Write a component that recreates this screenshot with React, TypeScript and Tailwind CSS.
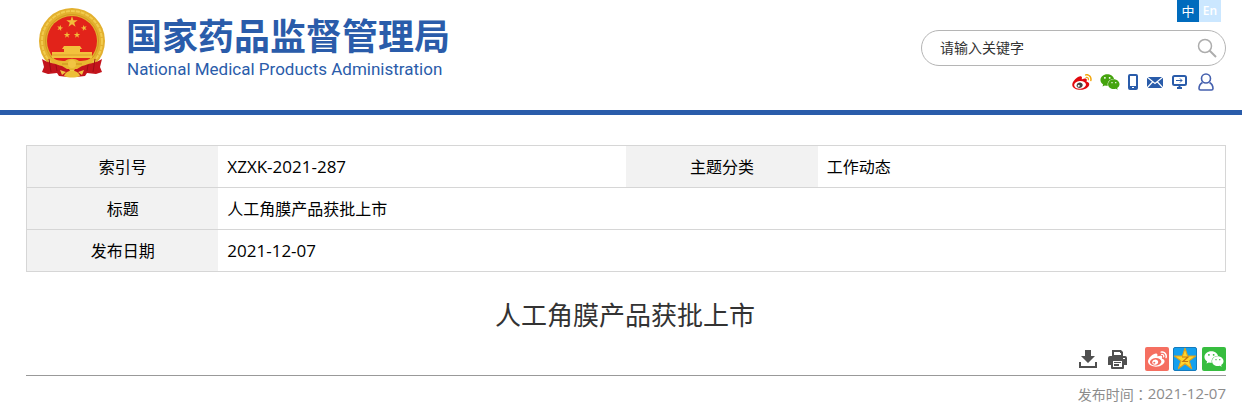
import React from "react";
import { FaWeixin } from "react-icons/fa";

const cjk = "font-['Noto_Sans_CJK_SC',sans-serif]";
const latin = "font-['Open_Sans',sans-serif]";

const STAR = "M0-10 2.3-3.1 9.5-3.1 3.7 1.2 5.9 8.1 0 3.8-5.9 8.1-3.7 1.2-9.5-3.1-2.3-3.1z";

const WEIBO_WAVES =
  "M407 177.6c7.6-24-13.4-46.8-37.4-41.7-22 4.8-28.8-28.1-7.1-32.8 50.1-10.9 92.3 37.1 76.5 84.8-6.8 21.2-38.8 10.8-32-10.3zM347.9 35.1c-25.9 5.6-16.8 43.7 8.3 38.3 72.3-15.2 134.8 52.8 111.7 124-7.4 24.2 29.1 37 37.4 12 31.9-99.8-55.1-195.9-157.4-174.3z";
const WEIBO_BODY =
  "M214.8 446.7C108.5 446.7 0 395.3 0 310.4c0-44.3 28-95.4 76.3-143.7C176 67 279.5 65.8 249.9 161c-4 13.1 12.3 5.7 12.3 6 79.5-33.6 140.5-16.8 114 51.4-3.7 9.4 1.1 10.9 8.3 13.1 135.7 42.3 34.8 215.2-169.7 215.2zm143.7-146.3c-5.4-55.7-78.5-94-163.4-85.7-84.8 8.6-148.8 60.3-143.4 116s78.5 94 163.4 85.7c84.8-8.6 148.8-60.3 143.4-116z";
const WEIBO_EYE =
  "M269.4 346.1c-17.1 38.8-66.8 60-109.1 46.3-40.8-13.1-58-53.4-40.3-89.7 17.7-35.4 63.1-55.4 103.4-45.1 42 10.8 63.1 50.2 46 88.5zm-86.3-30c-12.9-5.4-30 .3-38 12.9-8.3 12.9-4.3 28 8.6 34 13.1 6 30.8.3 39.1-12.9 8-13.1 3.7-28.3-9.7-34z";

type WeiboProps = { className: string; body: string; waves: string; eye: string };

function Weibo({ className, body, waves, eye }: WeiboProps) {
  return (
    <svg viewBox="0 30 512 420" className={className} aria-hidden="true">
      <path d={WEIBO_BODY} className={body} />
      <path d={WEIBO_WAVES} className={waves} />
      <path d={WEIBO_EYE} className={eye} />
    </svg>
  );
}

function Emblem() {
  return (
    <svg viewBox="0 0 68 72" className="w-[68px] h-[72px]" aria-hidden="true">
      {/* ring */}
      <circle cx="34" cy="34" r="33" fill="#e3b02e" />
      <circle cx="34" cy="34" r="30" fill="none" stroke="#f1cb4e" strokeWidth="2" strokeDasharray="4 1" />
      <circle cx="34" cy="34" r="26.500" fill="none" stroke="#d29a22" strokeWidth="1" />
      <circle cx="34" cy="34" r="25" fill="#e2231a" />
      {/* stars */}
      <g fill="#f2bd3a">
        <path d={STAR} transform="translate(34 15) scale(.6)" />
        <path d={STAR} transform="translate(22 21) rotate(15) scale(.32)" />
        <path d={STAR} transform="translate(46 21) rotate(-15) scale(.32)" />
        <path d={STAR} transform="translate(29 28) scale(.34)" />
        <path d={STAR} transform="translate(39 28) scale(.34)" />
      </g>
      {/* gate */}
      <path d="M26 39h16l2 3h-2v3h12v6H14v-6h12v-3h-2z" fill="#f3c13c" />
      <path d="M14 48h40" stroke="#dca02a" strokeWidth="1" />
      {/* drapes */}
      <path d="M4 52c6 4 12 5 19 5l7 3 4 8-4 2-9-1-2-3-9 1-6-2 2-5zM64 52c-6 4-12 5-19 5l-7 3-4 8 4 2 9-1 2-3 9 1 6-2-2-5z" fill="#c3141c" />
      <path d="M11 52l2 13M57 52l-2 13M18 58l1 6M50 58l-1 6" stroke="#9d0e14" strokeWidth="1" />
      {/* knot and gear */}
      <path d="M10 49c6 4 12 5 17 5 4-3 10-3 14 0 5 0 11-1 17-5-3 6-8 9-14 10l-5 3H29l-5-3c-6-1-11-4-14-10z" fill="#e8b730" />
      <path d="M24 57h6l2 2M44 57h-6l-2 2" fill="none" stroke="#c98f1c" strokeWidth="1" />
      <circle cx="34" cy="57" r="4" fill="#f1c443" />
      <path d="M26 69c2-7 14-7 16 0-5 2-11 2-16 0z" fill="#edbe38" />
      <path d="M22 63l6 2-4 3zM46 63l-6 2 4 3z" fill="#f1c443" />
    </svg>
  );
}

function QuickLinks() {
  return (
    <nav className="flex items-center h-[18px] mt-[7px] mr-3 text-[#2a5caa]">
      <a href="#weibo" aria-label="微博">
        <Weibo className="w-5 h-4" body="fill-[#e1090e]" waves="fill-[#f2a70d]" eye="fill-[#444]" />
      </a>
      <a href="#weixin" aria-label="微信" className="ml-2 text-[#45a40e]">
        <FaWeixin className="w-5 h-[18px]" />
      </a>
      <a href="#mobile" aria-label="移动版" className="ml-2">
        <svg viewBox="0 0 10 16" className="w-[10px] h-4">
          <rect x="1" y="1" width="8" height="14" rx="1" fill="none" stroke="currentColor" strokeWidth="2" />
          <path d="M1 12h8v3H1z" fill="currentColor" />
          <path d="M4 13h2v1H4z" fill="#fff" />
        </svg>
      </a>
      <a href="#mail" aria-label="邮箱" className="ml-[9px]">
        <svg viewBox="0 0 16 11" className="w-4 h-[11px]">
          <path d="M0 0h16v11H0z" fill="currentColor" />
          <path d="M0 0 8 6.500 16 0M0 11l5.500-6M16 11l-5.500-6" fill="none" stroke="#fff" strokeWidth="1.200" />
        </svg>
      </a>
      <a href="#screen" aria-label="大屏版" className="ml-[9px]">
        <svg viewBox="0 0 15 14" className="w-[15px] h-[14px]" fill="none" stroke="currentColor">
          <rect x="1" y="1" width="13" height="9" rx="1.500" strokeWidth="2" />
          <path d="M4 5.500h6M8 3.500l2 2-2 2" />
          <path d="M7.500 10v3M5 13h5" strokeWidth="2" />
        </svg>
      </a>
      <a href="#user" aria-label="个人中心" className="ml-[11px]">
        <svg viewBox="0 0 16 18" className="w-4 h-[18px]" fill="none" stroke="#4560ae" strokeWidth="1.600">
          <circle cx="8" cy="5.500" r="4.500" />
          <path d="M4.500 9.500C2 11 1 13 1 15.500 1 16.600 1.600 17 2.500 17h11c.9 0 1.500-.4 1.500-1.500 0-2.500-1-4.500-3.500-6" />
        </svg>
      </a>
    </nav>
  );
}

function Header() {
  return (
    <header className="flex justify-between items-start h-[115px] pl-[38px] pr-4 border-b-[5px] border-[#2a5caa]">
      <a href="#home" className="flex text-[#2a5caa] pt-[7px]">
        <Emblem />
        <div className="ml-5 pt-1">
          <div className="text-[36px] leading-[46px] font-bold whitespace-nowrap">国家药品监督管理局</div>
          <div className="pl-px text-[17px] leading-6 font-['Roboto',sans-serif] whitespace-nowrap">
            National Medical Products Administration
          </div>
        </div>
      </a>
      <div className="flex flex-col items-end">
        <div className="flex mr-[5px] text-xs text-white">
          <button className="w-[22px] h-[22px] bg-[#006bbd] text-[13px]">中</button>
          <button className={`w-[22px] h-[22px] bg-[#cbe7ff] font-semibold ${latin}`}>En</button>
        </div>
        <form className="flex items-center w-[305px] h-9 mt-2 pl-[18px] pr-2 border border-[#b5b5b5] rounded-full">
          <input
            type="text"
            aria-label="请输入关键字"
            placeholder="请输入关键字"
            className="flex-1 min-w-0 pb-0.5 text-sm outline-none placeholder:text-[#333]"
          />
          <button type="button" aria-label="搜索">
            <svg viewBox="0 0 20 20" className="w-5 h-5" fill="none" stroke="#adadad" strokeWidth="1.500">
              <circle cx="8" cy="8" r="6.500" />
              <path d="m12.500 12.500 6.500 6.500" strokeWidth="2" />
            </svg>
          </button>
        </form>
        <QuickLinks />
      </div>
    </header>
  );
}

function InfoTable() {
  const th = "pb-0.5 bg-[#f2f2f2] font-normal text-center";
  const td = "pl-[9px] pb-0.5";
  const code = `pl-[9px] text-[17px] ${latin}`;
  const row = "h-[42px] border border-[#d6d6d6]";

  return (
    <table className="w-full table-fixed border-collapse text-base text-black">
      <colgroup>
        <col className="w-[16%]" />
        <col className="w-[34%]" />
        <col className="w-[16%]" />
        <col className="w-[34%]" />
      </colgroup>
      <tbody>
        <tr className={row}>
          <th scope="row" className={th}>索引号</th>
          <td className={code}>XZXK-2021-287</td>
          <th scope="row" className={th}>主题分类</th>
          <td className={td}>工作动态</td>
        </tr>
        <tr className={row}>
          <th scope="row" className={th}>标题</th>
          <td colSpan={3} className={td}>人工角膜产品获批上市</td>
        </tr>
        <tr className={row}>
          <th scope="row" className={th}>发布日期</th>
          <td colSpan={3} className={code}>2021-12-07</td>
        </tr>
      </tbody>
    </table>
  );
}

function ShareBar() {
  return (
    <div className="flex justify-end items-center pb-1 border-b border-[#999] text-[#505050]">
      <button aria-label="下载">
        <svg viewBox="0 0 18 18" className="w-[18px] h-[18px]" fill="currentColor">
          <path d="M6 0h6v6h4l-7 7-7-7h4z" />
          <path d="M0 12h2v4h14v-4h2v6H0z" />
        </svg>
      </button>
      <button aria-label="打印" className="ml-[11px]">
        <svg viewBox="0 0 19 19" className="w-[19px] h-[19px]" fill="currentColor">
          <path fillRule="evenodd" d="M4 0h9l2 2v4H4zm2 2v3h7V3h-1V2z" />
          <path fillRule="evenodd" d="M2 6h15a2 2 0 0 1 2 2v7h-3v3a1 1 0 0 1-1 1H4a1 1 0 0 1-1-1v-3H0V8a2 2 0 0 1 2-2zm3 5v6h9v-6z" />
          <path d="M6 12h7v1H6zM6 14h5v2H6z" />
          <path d="M15 8h2v1h-2z" fill="#fff" />
        </svg>
      </button>
      <a href="#share-weibo" aria-label="分享到微博" className="ml-[18px] flex items-center justify-center w-6 h-6 rounded-xs bg-[#f56f61]">
        <Weibo className="w-[19px] h-4" body="fill-white" waves="fill-white" eye="fill-white" />
      </a>
      <a href="#share-qzone" aria-label="分享到QQ空间" className="ml-1">
        <svg viewBox="0 0 24 24" className="w-6 h-6">
          <rect x=".5" y=".5" width="23" height="23" rx="1.500" fill="#14a0ee" stroke="#147bbd" />
          <path d={STAR} transform="translate(12 12.500) scale(1.120)" fill="#ffd62e" stroke="#e3a21a" strokeWidth="1" strokeLinejoin="round" />
          <path d="M9 10h6l-5 4.500h5" fill="none" stroke="#c4760f" strokeWidth="1.200" />
        </svg>
      </a>
      <a href="#share-weixin" aria-label="分享到微信" className="ml-[5px] flex items-center justify-center w-6 h-6 rounded-xs bg-[#37bd3f] text-white">
        <FaWeixin className="w-5 h-[18px]" />
      </a>
    </div>
  );
}

export default function App() {
  return (
    <div className={`bg-white text-[#333] ${cjk}`}>
      <Header />
      <main className="pt-[30px] pl-[26px] pr-4">
        <InfoTable />
        <h1 className="pt-[22px] pr-0.5 text-[26px] leading-10 text-center">人工角膜产品获批上市</h1>
        <div className="mt-[13px]">
          <ShareBar />
        </div>
        <p className="flex justify-end items-center h-9 text-sm text-[#8c8c8c]">
          <span>发布时间</span>
          <span className="font-['Noto_Sans_CJK_TC',sans-serif]">：</span>
          <time dateTime="2021-12-07" className={`text-[15px] ${latin}`}>2021-12-07</time>
        </p>
      </main>
    </div>
  );
}
